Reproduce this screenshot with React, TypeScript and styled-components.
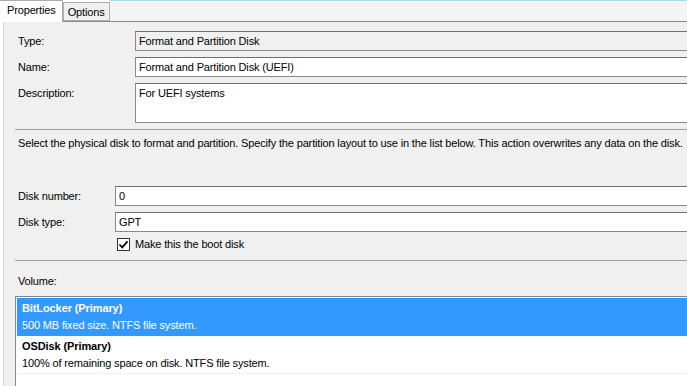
import React from 'react';
import styled, {createGlobalStyle} from 'styled-components';

const GlobalStyle = createGlobalStyle`
    body {
        margin: 0;
        background: #ffffff;
        font-family: 'Liberation Sans', Arial, sans-serif;
        font-size: 11px;
        letter-spacing: -0.15px;
        color: #000000;
    }
`;

const Window = styled.div`
    width: 687px;
    height: 386px;
    overflow: hidden;
    background: #ffffff;
`;

const TabStrip = styled.div`
    display: flex;
    align-items: flex-end;
    height: 21px;
    width: 740px;
`;

const Tab = styled.div<{active?: boolean}>`
    box-sizing: border-box;
    height: ${(p) => (p.active ? '22px' : '19px')};
    margin-bottom: ${(p) => (p.active ? '-1px' : '0')};
    padding: ${(p) => (p.active ? '3px 6px 0 7px' : '3px 4px 0 4px')};
    background: ${(p) => (p.active ? '#ffffff' : '#f0f0f0')};
    border: 1px solid #acacac;
    border-bottom: ${(p) => (p.active ? 'none' : '1px solid #acacac')};
    border-left: ${(p) => (p.active ? 'none' : '1px solid #acacac')};
    position: relative;
    z-index: ${(p) => (p.active ? 2 : 1)};
    white-space: nowrap;
`;

const StripFiller = styled.div`
    flex: 1;
    align-self: stretch;
    border-top: 1px solid #a7d8ec;
    background: #f4f4f4;
`;

const Panel = styled.div`
    box-sizing: border-box;
    width: 740px;
    height: 365px;
    margin-left: 3px;
    border-top: 1px solid #898989;
    border-left: 1px solid #d5d5d5;
    background: #f0f0f0;
    padding: 9px 0 0 11px;
`;

const FieldGrid = styled.div<{labelWidth: number}>`
    display: grid;
    grid-template-columns: ${(p) => p.labelWidth}px 1fr;
    row-gap: 6px;
    padding-left: 3px;
`;

const Label = styled.div<{flush?: boolean}>`
    padding-top: ${(p) => (p.flush ? '0' : '3px')};
    padding-left: ${(p) => (p.flush ? '3px' : '0')};
    line-height: 14px;
`;

const Field = styled.div<{readOnly?: boolean; tall?: boolean}>`
    box-sizing: border-box;
    height: ${(p) => (p.tall ? '40px' : '20px')};
    border: 1px solid #7f7f7f;
    border-color: #6e6e6e #a0a0a0 #8a8a8a #8a8a8a;
    background: ${(p) => (p.readOnly ? '#f0f0f0' : '#ffffff')};
    padding: 2px 3px;
    line-height: 14px;
    white-space: nowrap;
`;

const Separator = styled.div<{top: number; bottom: number}>`
    height: 1px;
    background: #a0a0a0;
    margin: ${(p) => p.top}px 0 ${(p) => p.bottom}px 0;
`;

const Hint = styled.p`
    margin: 0 0 35px 3px;
    line-height: 15px;
    white-space: nowrap;
`;

const CheckRow = styled.label`
    display: flex;
    align-items: center;
    gap: 5px;
    height: 14px;
    margin-top: -1px;
    padding-left: 2px;
`;

const CheckBox = styled.span`
    box-sizing: border-box;
    width: 13px;
    height: 13px;
    border: 1px solid #333333;
    background: #ffffff;
    display: flex;
    align-items: center;
    justify-content: center;
`;

const ListBox = styled.div`
    box-sizing: border-box;
    margin-top: 8px;
    border: 1px solid #828790;
    border-right: none;
    background: #ffffff;
    padding: 1px 0 0 1px;
    height: 100px;
`;

const ListItem = styled.div<{selected?: boolean}>`
    height: 38px;
    box-sizing: border-box;
    padding: 2px 0 0 5px;
    background: ${(p) => (p.selected ? '#3399ff' : '#ffffff')};
    color: ${(p) => (p.selected ? '#ffffff' : '#000000')};
    border-bottom: 1px solid ${(p) => (p.selected ? '#3399ff' : '#f0f0f0')};
    line-height: 17px;
`;

const ItemTitle = styled.div`
    font-weight: bold;
    letter-spacing: -0.1px;
`;

const volumes = [
    {title: 'BitLocker (Primary)', detail: '500 MB fixed size. NTFS file system.'},
    {title: 'OSDisk (Primary)', detail: '100% of remaining space on disk. NTFS file system.'},
];

export default function App() {
    return (
        <Window>
            <GlobalStyle />
            <TabStrip>
                <Tab active>Properties</Tab>
                <Tab>Options</Tab>
                <StripFiller />
            </TabStrip>
            <Panel>
                <FieldGrid labelWidth={117}>
                    <Label>Type:</Label>
                    <Field readOnly>Format and Partition Disk</Field>
                    <Label>Name:</Label>
                    <Field>Format and Partition Disk (UEFI)</Field>
                    <Label>Description:</Label>
                    <Field tall>For UEFI systems</Field>
                </FieldGrid>
                <Separator top={6} bottom={6} />
                <Hint>
                    Select the physical disk to format and partition. Specify the
                    partition layout to use in the list below. This action overwrites
                    any data on the disk.
                </Hint>
                <FieldGrid labelWidth={97}>
                    <Label>Disk number:</Label>
                    <Field>0</Field>
                    <Label>Disk type:</Label>
                    <Field>GPT</Field>
                    <span />
                    <CheckRow>
                        <CheckBox>
                            <svg width="11" height="11" viewBox="0 0 11 11">
                                <path
                                    d="M1.5 5.5 L4.2 8.3 L9.5 2.3"
                                    fill="none"
                                    stroke="#000"
                                    strokeWidth="1.8"
                                />
                            </svg>
                        </CheckBox>
                        Make this the boot disk
                    </CheckRow>
                </FieldGrid>
                <Separator top={9} bottom={13} />
                <Label flush>Volume:</Label>
                <ListBox>
                    {volumes.map((v, i) => (
                        <ListItem key={v.title} selected={i === 0}>
                            <ItemTitle>{v.title}</ItemTitle>
                            <div>{v.detail}</div>
                        </ListItem>
                    ))}
                </ListBox>
            </Panel>
        </Window>
    );
}
